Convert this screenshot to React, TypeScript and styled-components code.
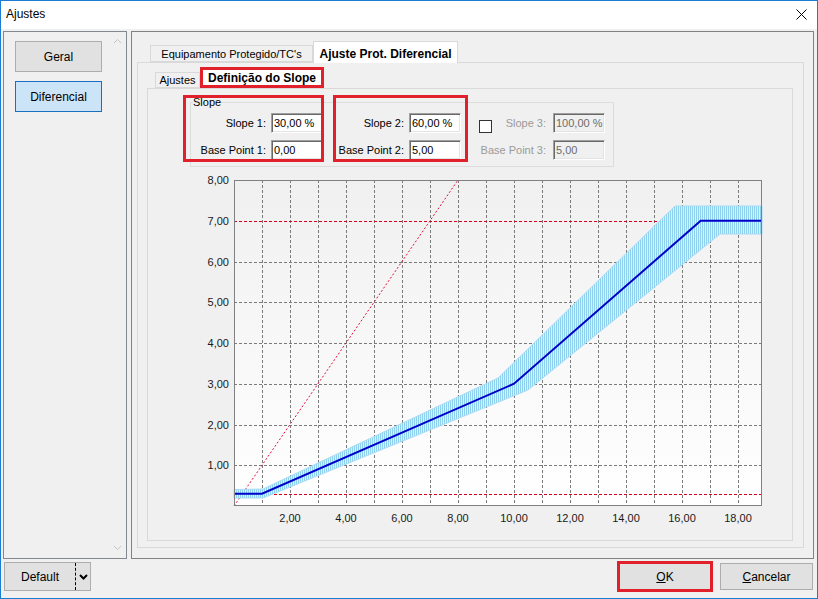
import React from "react";
import styled, { createGlobalStyle } from "styled-components";

const FONT = `"Liberation Sans", Arial, sans-serif`;

const GlobalStyle = createGlobalStyle`
  html, body { margin: 0; padding: 0; }
  body { font-family: ${FONT}; font-size: 11px; color: #000; background: #f0f0f0; }
  * { box-sizing: border-box; }
`;

const Window = styled.div`
  width: 818px;
  height: 599px;
  border: 1px solid #1c7bd3;
  background: #f0f0f0;
  display: flex;
  flex-direction: column;
  overflow: hidden;
`;

const TitleBar = styled.header`
  height: 28px;
  flex: none;
  background: #fff;
  display: flex;
  align-items: center;
  justify-content: space-between;
  padding: 0 10px 2px 5px;
`;

const TitleText = styled.span`
  font-size: 12px;
`;

const CloseGlyph = styled.span`
  display: flex;
  align-items: center;
  justify-content: center;
  width: 12px;
  height: 12px;
`;

const Body = styled.div`
  flex: 1;
  display: flex;
  flex-direction: column;
  padding: 2px 3px 0 2px;
`;

const MainRow = styled.div`
  display: flex;
  gap: 4px;
  height: 528px;
  flex: none;
`;

const SidePanel = styled.nav`
  width: 124px;
  border: 1px solid #828790;
  display: flex;
  background: #f0f0f0;
`;

const NavList = styled.div`
  flex: 1;
  display: flex;
  flex-direction: column;
  gap: 9px;
  padding: 9px 0 0 11px;
`;

const NavButton = styled.button<{ $active?: boolean }>`
  width: 87px;
  height: 31px;
  padding: 0;
  font-family: ${FONT};
  font-size: 12px;
  color: #000;
  border: 1px solid ${(p) => (p.$active ? "#1c6fbf" : "#adadad")};
  background: ${(p) => (p.$active ? "#cce4f7" : "#e1e1e1")};
`;

const ScrollTrack = styled.div`
  width: 17px;
  display: flex;
  flex-direction: column;
  justify-content: space-between;
  align-items: center;
  padding: 6px 0 7px;
`;

const MainPanel = styled.section`
  flex: 1;
  min-width: 0;
  border: 1px solid #828282;
  padding: 9px 9px 10px 5px;
  display: flex;
  flex-direction: column;
`;

const TabStrip = styled.div<{ $indent: number; $height: number }>`
  display: flex;
  align-items: flex-end;
  flex: none;
  height: ${(p) => p.$height}px;
  padding-left: ${(p) => p.$indent}px;
  position: relative;
  z-index: 1;
`;

const Tab = styled.div<{ $active?: boolean; $marked?: boolean; $width: number; $height: number }>`
  width: ${(p) => p.$width}px;
  height: ${(p) => p.$height}px;
  display: flex;
  align-items: center;
  justify-content: center;
  white-space: nowrap;
  background: ${(p) => (p.$active ? "#fff" : "#f0f0f0")};
  font-size: ${(p) => (p.$active ? "12px" : "11px")};
  font-weight: ${(p) => (p.$active ? 700 : 400)};
  border: ${(p) => (p.$marked ? "3px solid #e0202a" : "1px solid #d9d9d9")};
  border-bottom: ${(p) =>
    p.$marked ? "3px solid #e0202a" : p.$active ? "none" : "1px solid #d9d9d9"};
  margin-bottom: ${(p) => (p.$active && !p.$marked ? "-1px" : "0")};
  padding-top: ${(p) => (p.$active && !p.$marked ? "2px" : "0")};
`;

const TabPage = styled.div`
  flex: 1;
  min-height: 0;
  border: 1px solid #d9d9d9;
  background: #f0f0f0;
  padding: 4px 10px 6px 9px;
  display: flex;
  flex-direction: column;
`;

const SubPage = styled.div`
  flex: 1;
  min-height: 0;
  border: 1px solid #d9d9d9;
  background: #f0f0f0;
  display: flex;
  flex-direction: column;
`;

const SettingsArea = styled.div`
  position: relative;
  padding: 7px 0 0 42px;
  flex: none;
`;

const GroupBox = styled.fieldset`
  width: 424px;
  margin: 0;
  padding: 4px 9px 6px 0;
  border: 1px solid #dcdcdc;
  min-width: 0;
`;

const GroupLegend = styled.legend`
  margin-left: 2px;
  padding: 0;
  font-size: 11px;
  line-height: 13px;
`;

const FieldColumns = styled.div`
  display: flex;
  align-items: flex-start;
`;

const FieldGrid = styled.div<{ $label: number; $gap: number; $offset: number }>`
  display: grid;
  grid-template-columns: ${(p) => p.$label}px 52px;
  column-gap: ${(p) => p.$gap}px;
  row-gap: 7px;
  align-items: center;
  margin-left: ${(p) => p.$offset}px;
`;

const FieldLabel = styled.label<{ $disabled?: boolean }>`
  justify-self: end;
  white-space: nowrap;
  font-size: 11px;
  color: ${(p) => (p.$disabled ? "#9a9a9a" : "#000")};
`;

const CheckCell = styled.div`
  display: flex;
  align-items: center;
  justify-content: space-between;
`;

const CheckBox = styled.span`
  width: 13px;
  height: 13px;
  margin-top: 7px;
  border: 1px solid #333;
  background: #fff;
`;

const TextBox = styled.div<{ $disabled?: boolean }>`
  height: 20px;
  display: flex;
  align-items: center;
  padding-left: 2px;
  font-size: 11px;
  white-space: nowrap;
  color: ${(p) => (p.$disabled ? "#6d6d6d" : "#000")};
  background: ${(p) => (p.$disabled ? "#f0f0f0" : "#fff")};
  border-top: 1px solid #a0a0a0;
  border-left: 1px solid #a0a0a0;
  border-right: 1px solid #fff;
  border-bottom: 1px solid #fff;
  box-shadow: inset 1px 1px 0 #696969, inset -1px -1px 0 #e3e3e3;
`;

const Highlight = styled.div<{ $left: number; $top: number; $w: number; $h: number }>`
  position: absolute;
  left: ${(p) => p.$left}px;
  top: ${(p) => p.$top}px;
  width: ${(p) => p.$w}px;
  height: ${(p) => p.$h}px;
  border: 3px solid #e0202a;
  pointer-events: none;
`;

const ChartBox = styled.div`
  margin-top: 3px;
  flex: none;
`;

const Footer = styled.footer`
  height: 39px;
  flex: none;
  display: flex;
  align-items: center;
  gap: 7px;
  padding: 0 1px 4px 1px;
`;

const SplitButton = styled.div`
  width: 87px;
  height: 29px;
  display: flex;
  border: 1px solid #adadad;
  background: #e1e1e1;
  font-size: 12px;
`;

const SplitMain = styled.span`
  width: 71px;
  display: flex;
  align-items: center;
  justify-content: center;
  border-right: 1px dashed #000;
`;

const SplitArrow = styled.span`
  flex: 1;
  display: flex;
  align-items: center;
  justify-content: center;
`;

const Spacer = styled.div`
  flex: 1;
`;

const MarkFrame = styled.div`
  width: 96px;
  height: 31px;
  border: 3px solid #e0202a;
  display: flex;
`;

const DialogButton = styled.button<{ $w?: number; $fill?: boolean }>`
  width: ${(p) => (p.$fill ? "100%" : `${p.$w}px`)};
  height: ${(p) => (p.$fill ? "100%" : "27px")};
  padding: 0;
  font-family: ${FONT};
  font-size: 12px;
  color: #000;
  background: #e1e1e1;
  border: ${(p) => (p.$fill ? "none" : "1px solid #adadad")};
  u { text-decoration: underline; }
`;

/* ---------- Chart ---------- */
const CW = 644;
const CH = 362;
const PL = 86;
const PT = 10;
const PR = 614;
const PB = 336;
const UX = 28;
const UY = 40.75;
const X = (u: number) => PL + u * UX;
const Y = (v: number) => PB - v * UY;

const pts = (a: [number, number][]) => a.map(([x, y]) => `${x},${y}`).join(" ");

const band: [number, number][] = [
  [86, 319.5],
  [115, 319],
  [350, 208],
  [527, 36],
  [PR, 36],
  [PR, 64],
  [572, 64],
  [380, 220],
  [115, 328],
  [86, 328],
];

const curve: [number, number][] = [
  [X(0), Y(0.3)],
  [X(1), Y(0.3)],
  [X(10), Y(3)],
  [X(16.667), Y(7)],
  [PR, Y(7)],
];

const fmt = (n: number) => n.toFixed(2).replace(".", ",");

function SlopeChart() {
  const vLines = Array.from({ length: 18 }, (_, i) => i + 1);
  const hLines = [1, 2, 3, 4, 5, 6];
  return (
    <svg width={CW} height={CH} viewBox={`0 0 ${CW} ${CH}`} style={{ display: "block" }}>
      <defs>
        <linearGradient id="plotBg" x1="0" y1="0" x2="0" y2="1">
          <stop offset="0" stopColor="#f0f0f0" />
          <stop offset="1" stopColor="#ffffff" />
        </linearGradient>
        <pattern id="hatch" width="2" height="4" patternUnits="userSpaceOnUse">
          <rect width="2" height="4" fill="#dcf0f9" />
          <rect width="1" height="4" fill="#8fd0ee" />
        </pattern>
      </defs>
      <rect x={PL} y={PT} width={PR - PL} height={PB - PT} fill="url(#plotBg)" />
      {vLines.map((u) => (
        <line key={`v${u}`} x1={X(u) + 0.5} x2={X(u) + 0.5} y1={PT} y2={PB} stroke="#7a7a7a" strokeDasharray="3 2" />
      ))}
      {hLines.map((v) => (
        <line key={`h${v}`} x1={PL} x2={PR} y1={Math.round(Y(v)) + 0.5} y2={Math.round(Y(v)) + 0.5} stroke="#7a7a7a" strokeDasharray="3 2" />
      ))}
      <line x1={PL} x2={PR} y1={Math.round(Y(7)) + 0.5} y2={Math.round(Y(7)) + 0.5} stroke="#d4001a" strokeDasharray="3 2" />
      <line x1={PL} x2={PR} y1={Math.round(Y(0.3)) + 0.5} y2={Math.round(Y(0.3)) + 0.5} stroke="#d4001a" strokeDasharray="3 2" />
      <line x1={X(0)} y1={Y(0)} x2={X(8)} y2={Y(8)} stroke="#e0103a" strokeDasharray="2 2" />
      <polygon points={pts(band)} fill="url(#hatch)" stroke="#a8dcf2" strokeWidth={1} />
      <polyline points={pts(curve)} fill="none" stroke="#0000c8" strokeWidth={2} />
      <rect x={PL + 0.5} y={PT + 0.5} width={PR - PL - 1} height={PB - PT - 1} fill="none" stroke="#808080" />
      {[8, 7, 6, 5, 4, 3, 2, 1].map((v) => (
        <text key={`yl${v}`} x={81} y={Y(v) + 4} textAnchor="end" fontSize="11" fontFamily={FONT} fill="#1a1a1a">
          {fmt(v)}
        </text>
      ))}
      {[2, 4, 6, 8, 10, 12, 14, 16, 18].map((u) => (
        <text key={`xl${u}`} x={X(u)} y={352} textAnchor="middle" fontSize="11" fontFamily={FONT} fill="#1a1a1a">
          {fmt(u)}
        </text>
      ))}
    </svg>
  );
}

const Chevron = ({ up, color, bold }: { up?: boolean; color: string; bold?: boolean }) => (
  <svg width="9" height="6" viewBox="0 0 9 6">
    <polyline
      points={up ? "1,5 4.5,1.5 8,5" : "1,1 4.5,4.5 8,1"}
      fill="none"
      stroke={color}
      strokeWidth={bold ? 2 : 1}
    />
  </svg>
);

export default function App() {
  return (
    <>
      <GlobalStyle />
      <Window>
        <TitleBar>
          <TitleText>Ajustes</TitleText>
          <CloseGlyph>
            <svg width="11" height="11" viewBox="0 0 11 11">
              <path d="M0.5 0.5 L10.5 10.5 M10.5 0.5 L0.5 10.5" stroke="#000" strokeWidth="1" />
            </svg>
          </CloseGlyph>
        </TitleBar>
        <Body>
          <MainRow>
            <SidePanel>
              <NavList>
                <NavButton>Geral</NavButton>
                <NavButton $active>Diferencial</NavButton>
              </NavList>
              <ScrollTrack>
                <Chevron up color="#c4c4c4" />
                <Chevron color="#c4c4c4" />
              </ScrollTrack>
            </SidePanel>
            <MainPanel>
              <TabStrip $indent={13} $height={21}>
                <Tab $width={163} $height={17}>
                  Equipamento Protegido/TC's
                </Tab>
                <Tab $active $width={145} $height={22}>
                  Ajuste Prot. Diferencial
                </Tab>
              </TabStrip>
              <TabPage>
                <TabStrip $indent={8} $height={21}>
                  <Tab $width={45} $height={16}>
                    Ajustes
                  </Tab>
                  <Tab $active $marked $width={124} $height={21}>
                    Definição do Slope
                  </Tab>
                </TabStrip>
                <SubPage>
                  <SettingsArea>
                    <GroupBox>
                      <GroupLegend>Slope</GroupLegend>
                      <FieldColumns>
                        <FieldGrid $label={74} $gap={5} $offset={1}>
                          <FieldLabel>Slope 1:</FieldLabel>
                          <TextBox>30,00 %</TextBox>
                          <FieldLabel>Base Point 1:</FieldLabel>
                          <TextBox>0,00</TextBox>
                        </FieldGrid>
                        <FieldGrid $label={73} $gap={5} $offset={8}>
                          <FieldLabel>Slope 2:</FieldLabel>
                          <TextBox>60,00 %</TextBox>
                          <FieldLabel>Base Point 2:</FieldLabel>
                          <TextBox>5,00</TextBox>
                        </FieldGrid>
                        <FieldGrid $label={67} $gap={7} $offset={18}>
                          <CheckCell>
                            <CheckBox />
                            <FieldLabel $disabled>Slope 3:</FieldLabel>
                          </CheckCell>
                          <TextBox $disabled>100,00 %</TextBox>
                          <FieldLabel $disabled>Base Point 3:</FieldLabel>
                          <TextBox $disabled>5,00</TextBox>
                        </FieldGrid>
                      </FieldColumns>
                    </GroupBox>
                    <Highlight $left={35} $top={6} $w={141} $h={67} />
                    <Highlight $left={185} $top={6} $w={135} $h={67} />
                  </SettingsArea>
                  <ChartBox>
                    <SlopeChart />
                  </ChartBox>
                </SubPage>
              </TabPage>
            </MainPanel>
          </MainRow>
          <Footer>
            <SplitButton>
              <SplitMain>Default</SplitMain>
              <SplitArrow>
                <Chevron color="#000" bold />
              </SplitArrow>
            </SplitButton>
            <Spacer />
            <MarkFrame>
              <DialogButton $fill>
                <u>O</u>K
              </DialogButton>
            </MarkFrame>
            <DialogButton $w={93}>
              <u>C</u>ancelar
            </DialogButton>
          </Footer>
        </Body>
      </Window>
    </>
  );
}
